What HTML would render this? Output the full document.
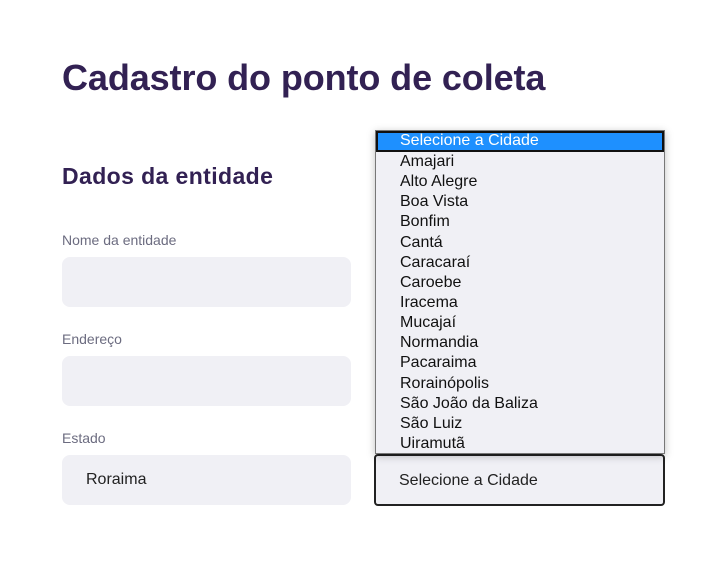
<!DOCTYPE html>
<html><head><meta charset="utf-8"><style>
body{margin:0;background:#fff;width:725px;height:581px;position:relative;overflow:hidden;font-family:"Liberation Sans",sans-serif}
h1{position:absolute;left:62px;top:57px;margin:0;font-size:36px;font-weight:bold;color:#322153;letter-spacing:-0.1px}
h2{position:absolute;left:62px;top:163px;margin:0;font-size:23px;font-weight:bold;color:#322153;letter-spacing:0.4px}
.l{position:absolute;left:62px;font-size:14px;color:#6c6c80}
.i{position:absolute;left:62px;width:289px;height:50px;background:#f0f0f5;border-radius:8px;font-size:16px;color:#222;line-height:50px;box-sizing:border-box;padding-left:24px}
.sel{position:absolute;left:374px;top:454px;width:291px;height:52px;border:2px solid #222;border-radius:4px;box-sizing:border-box;background:#f0f0f5;font-size:16px;line-height:49px;padding-left:23px;color:#222}
.dd{position:absolute;left:375px;top:130px;width:290px;height:324px;background:#f0f0f5;border:1px solid #777;box-sizing:border-box;box-shadow:0 2px 8px rgba(0,0,0,.25)}
.dd div{height:20.15px;line-height:20px;font-size:16px;padding-left:24px;color:#111}
.dd .h{background:#1e90ff;color:#fff;border:2px solid #111;height:17px;line-height:15px;padding-left:22px;margin:0}
</style></head><body>
<h1>Cadastro do ponto de coleta</h1>
<h2>Dados da entidade</h2>
<div class="l" style="top:232px">Nome da entidade</div>
<div class="i" style="top:257px"></div>
<div class="l" style="top:331px">Endereço</div>
<div class="i" style="top:356px"></div>
<div class="l" style="top:430px">Estado</div>
<div class="i" style="top:455px">Roraima</div>
<div class="sel">Selecione a Cidade</div>
<div class="dd">
<div class="h">Selecione a Cidade</div>
<div>Amajari</div><div>Alto Alegre</div><div>Boa Vista</div><div>Bonfim</div><div>Cantá</div><div>Caracaraí</div><div>Caroebe</div><div>Iracema</div><div>Mucajaí</div><div>Normandia</div><div>Pacaraima</div><div>Rorainópolis</div><div>São João da Baliza</div><div>São Luiz</div><div>Uiramutã</div>
</div>
</body></html>
